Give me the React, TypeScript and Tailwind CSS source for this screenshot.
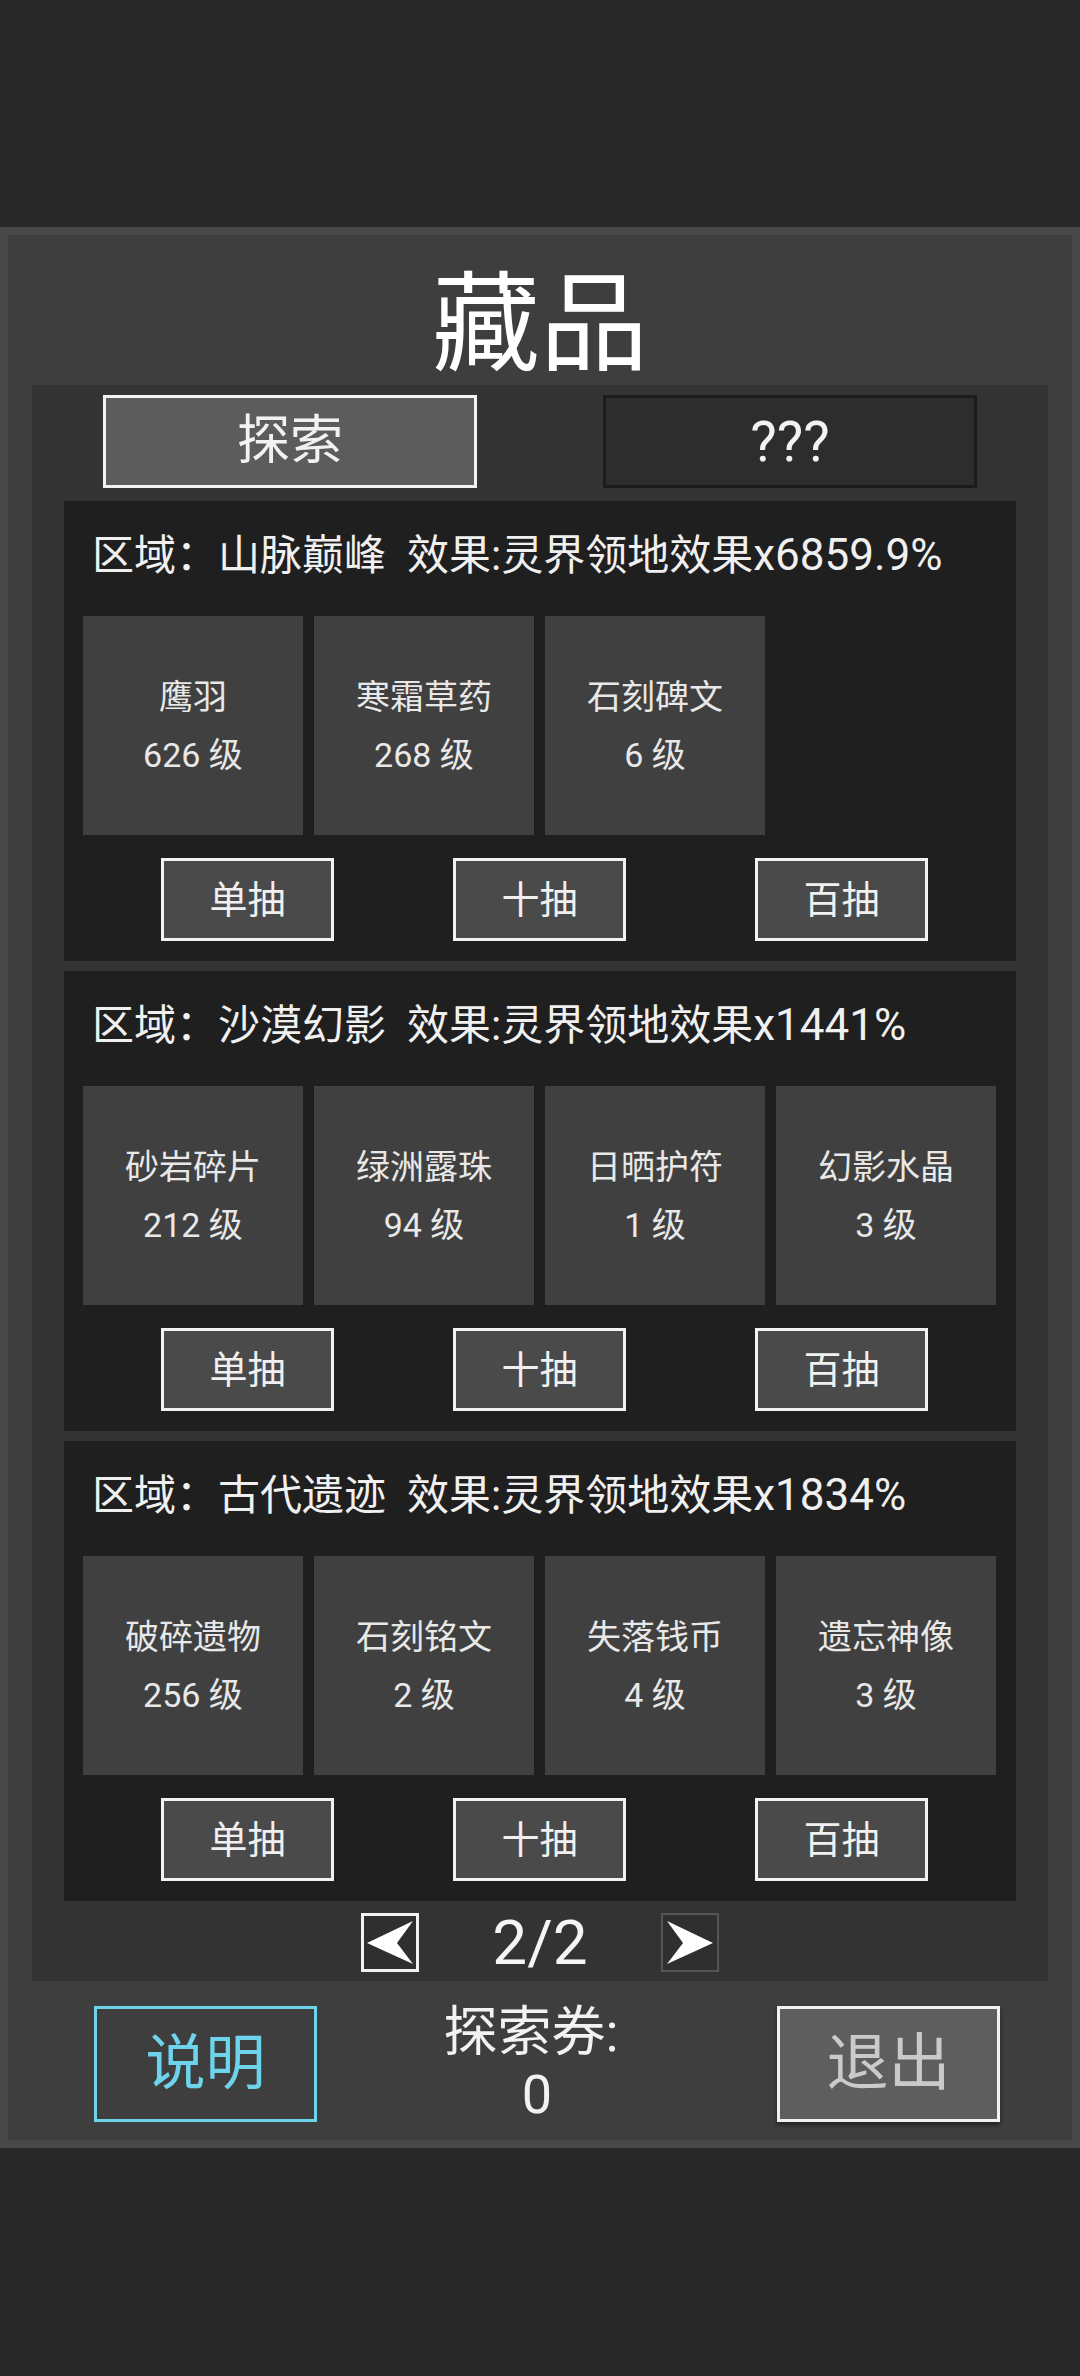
import React from "react";

type Item = { name: string; level: number };
type Region = { area: string; effect: string; items: Item[] };

const regions: Region[] = [
  {
    area: "山脉巅峰",
    effect: "x6859.9%",
    items: [
      { name: "鹰羽", level: 626 },
      { name: "寒霜草药", level: 268 },
      { name: "石刻碑文", level: 6 },
    ],
  },
  {
    area: "沙漠幻影",
    effect: "x1441%",
    items: [
      { name: "砂岩碎片", level: 212 },
      { name: "绿洲露珠", level: 94 },
      { name: "日晒护符", level: 1 },
      { name: "幻影水晶", level: 3 },
    ],
  },
  {
    area: "古代遗迹",
    effect: "x1834%",
    items: [
      { name: "破碎遗物", level: 256 },
      { name: "石刻铭文", level: 2 },
      { name: "失落钱币", level: 4 },
      { name: "遗忘神像", level: 3 },
    ],
  },
];

const DrawButton = ({ label, className = "" }: { label: string; className?: string }) => (
  <button
    className={`w-[173px] h-[83px] border-[3px] border-[#f2f2f2] bg-[#4a4a4a] text-[38px] leading-none text-[#f0f0f0] flex items-center justify-center ${className}`}
  >
    {label}
  </button>
);

const RegionCard = ({ region }: { region: Region }) => (
  <div className="h-[460px] bg-[#1f1f1f] flex flex-col pt-[30px]">
    <div className="pl-[28px] h-[49px] text-[42px] leading-[49px] text-[#f0f0f0] whitespace-nowrap flex items-center">
      <span>区域：{region.area}</span>
      <span className="inline-block w-[21px]" />
      <span>效果:灵界领地效果</span>
      <span className="text-[44px]">{region.effect}</span>
    </div>
    <div className="mt-[36px] pl-[19px] flex gap-[11px]">
      {region.items.map((it) => (
        <div
          key={it.name}
          className="w-[220px] h-[219px] bg-[#404040] flex flex-col items-center justify-center gap-[18px] text-[34px] leading-[40px] text-[#e8e8e8]"
        >
          <div>{it.name}</div>
          <div>{it.level} 级</div>
        </div>
      ))}
    </div>
    <div className="mt-[23px] pl-[97px] flex">
      <DrawButton label="单抽" />
      <DrawButton label="十抽" className="ml-[119px]" />
      <DrawButton label="百抽" className="ml-[129px]" />
    </div>
  </div>
);

export default function App() {
  return (
    <div className="w-[1080px] h-[2376px] bg-[#282828] flex flex-col font-['Roboto','Noto_Sans_CJK_SC',sans-serif] text-white">
      <div className="h-[227px] shrink-0" />
      <div className="border-[8px] border-[#484848] bg-[#3e3e3e] flex flex-col">
        <div className="h-[150px] flex items-center justify-center text-[108px] leading-none text-white pt-[30px]">
          藏品
        </div>

        <div className="mx-[24px] bg-[#333333] flex flex-col pt-[10px] pb-[9px]">
          <div className="h-[93px] px-[71px] flex justify-between">
            <div className="w-[374px] h-[93px] border-[3px] border-[#f2f2f2] bg-[#5c5c5c] flex items-center justify-center text-[53px] leading-none text-[#f2f2f2]">
              探索
            </div>
            <div className="w-[374px] h-[93px] border-[3px] border-[#1c1c1c] bg-[#2d2d2d] flex items-center justify-center text-[56px] leading-none text-[#f2f2f2]">
              ???
            </div>
          </div>

          <div className="mt-[13px] px-[32px] flex flex-col gap-[10px]">
            {regions.map((r) => (
              <RegionCard key={r.area} region={r} />
            ))}
          </div>

          <div className="mt-[12px] h-[59px] flex items-center justify-center gap-[29px]">
            <div className="w-[58px] h-[59px] border-[3px] border-[#f2f2f2] bg-[#2f2f2f]">
              <svg width="52" height="53" viewBox="0 0 52 53">
                <polygon points="3,27 49,5 33,27 49,48" fill="#ffffff" />
              </svg>
            </div>
            <div className="w-[184px] text-center text-[62px] leading-none text-[#f5f5f5]">2/2</div>
            <div className="w-[58px] h-[59px] border-[2px] border-[#555555] bg-[#2f2f2f]">
              <svg width="54" height="55" viewBox="0 0 54 55">
                <polygon points="4,6 50,28 4,49 20,28" fill="#ffffff" />
              </svg>
            </div>
          </div>
        </div>

        <div className="h-[159px] pt-[25px] pb-[18px] flex items-start">
          <div className="ml-[86px] w-[223px] h-[116px] border-[3px] border-[#6dd4ec] flex items-center justify-center text-[60px] leading-none text-[#6dd4ec]">
            说明
          </div>
          <div className="w-[440px] h-[116px] flex flex-col items-center justify-center text-[54px] leading-[62px] text-[#f2f2f2]">
            <div className="pr-[12px]">探索券:</div>
            <div>0</div>
          </div>
          <div className="ml-[20px] w-[223px] h-[116px] border-[3px] border-[#f2f2f2] bg-[#5e5e5e] shadow-[0_3px_4px_rgba(0,0,0,0.45)] flex items-center justify-center text-[62px] leading-none text-[#cacaca]">
            退出
          </div>
        </div>
      </div>
      <div className="flex-1" />
    </div>
  );
}
